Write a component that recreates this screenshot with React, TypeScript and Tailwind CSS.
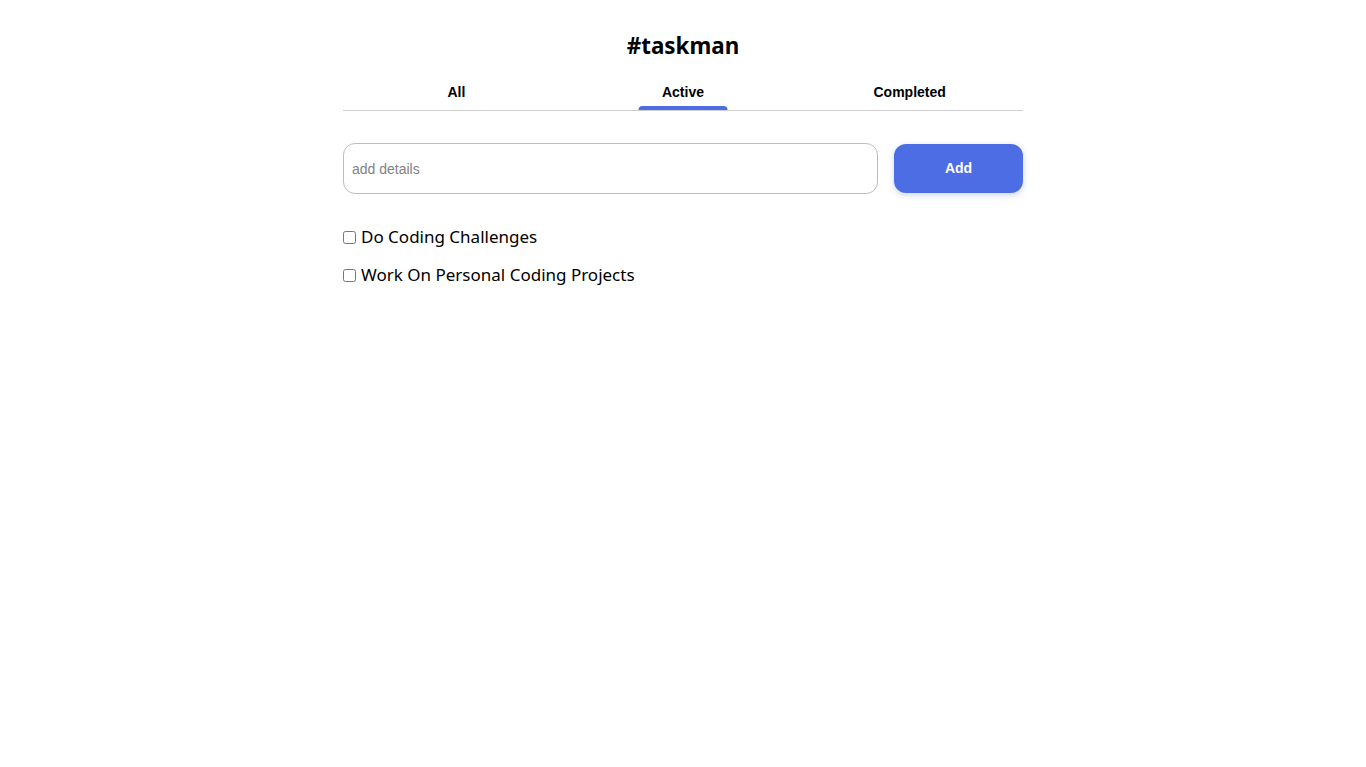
import { useState } from "react";

const tabs = ["All", "Active", "Completed"];

const tasks = ["Do Coding Challenges", "Work On Personal Coding Projects"];

export default function App() {
  const [active, setActive] = useState("Active");

  return (
    <div className="min-h-screen bg-white font-['Liberation_Sans',Arial,sans-serif] text-black">
      <div className="mx-auto w-[680px] pt-[31px]">
        {/* Title */}
        <h1 className="text-center font-['Noto_Sans',sans-serif] text-[22.4px] leading-[30px] font-bold">
          #taskman
        </h1>

        {/* Tabs */}
        <div className="mt-[21px] grid grid-cols-3 border-b border-[#cfcfcf]">
          {tabs.map((tab) => (
            <button
              key={tab}
              onClick={() => setActive(tab)}
              className="relative h-[28px] pb-[8px] text-[14px] font-bold"
            >
              {tab}
              {active === tab && (
                <span className="absolute bottom-0 left-1/2 h-[4px] w-[89px] -translate-x-1/2 rounded-t-[4px] bg-[#4d6de5]" />
              )}
            </button>
          ))}
        </div>

        {/* Input row */}
        <div className="mt-[32px] flex items-center gap-4">
          <input
            className="h-[51px] flex-1 rounded-[12px] border border-[#bdbdbd] px-[8px] text-[14px] outline-none placeholder:text-[#828282]"
            placeholder="add details"
          />
          <button className="h-[49px] w-[129px] rounded-[12px] bg-[#4d6de5] text-[14px] font-bold text-white shadow-[0_2px_6px_rgba(127,148,226,0.4)]">
            Add
          </button>
        </div>

        {/* Tasks */}
        <ul className="mt-[31px] flex flex-col gap-[14px] font-['Noto_Sans',sans-serif] text-[17px]">
          {tasks.map((task) => (
            <li key={task} className="flex h-[24px] items-center gap-[5px]">
              <input type="checkbox" className="m-0 h-[13px] w-[13px]" />
              <span>{task}</span>
            </li>
          ))}
        </ul>
      </div>
    </div>
  );
}
